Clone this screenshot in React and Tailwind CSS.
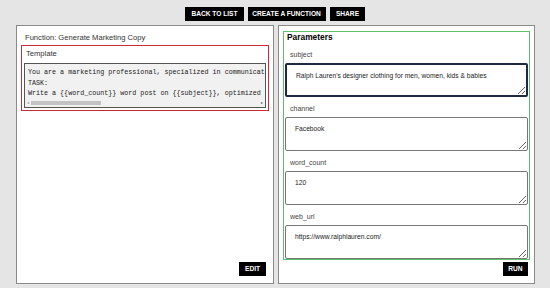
import { useState } from "react";

const params = [
  { name: "subject", value: "Ralph Lauren's designer clothing for men, women, kids & babies", focused: true },
  { name: "channel", value: "Facebook" },
  { name: "word_count", value: "120" },
  { name: "web_url", value: "https://www.ralphlauren.com/" },
];

function BlackButton({ children, className = "" }) {
  return (
    <button
      className={`h-[14px] whitespace-nowrap bg-black px-0 text-center text-[6.6px] font-bold leading-[14px] text-white ${className}`}
    >
      {children}
    </button>
  );
}

function ParamField({ name, value, focused }) {
  const [text, setText] = useState(value);
  return (
    <div>
      <div className="px-[5px] pt-[6px] pb-[3px] text-[7px] leading-[11px] text-[#444]">{name}</div>
      <textarea
        value={text}
        onChange={(e) => setText(e.target.value)}
        className={`block h-[34px] w-full resize-y rounded-[2px] bg-white px-[9px] pt-[5px] text-[6.7px] leading-[11px] text-[#222] outline-none ${
          focused ? "border-2 border-[#1c2a44]" : "border border-[#777]"
        }`}
      />
    </div>
  );
}

export default function App() {
  return (
    <div className="h-[288px] w-[550px] overflow-hidden bg-[#e6e5e5] font-['Liberation_Sans',Arial,sans-serif]">
      {/* top buttons */}
      <div className="flex justify-center gap-[3.5px] pt-[7px]">
        <BlackButton className="w-[59px]">BACK TO LIST</BlackButton>
        <BlackButton className="w-[78px]">CREATE A FUNCTION</BlackButton>
        <BlackButton className="ml-[1px] w-[35px]">SHARE</BlackButton>
      </div>

      <div className="mt-[4px] flex gap-[4px] pl-[16px]">
        {/* left panel */}
        <div className="flex h-[259px] w-[258px] flex-col border border-[#8a8a8a] bg-white px-[4px] pb-[7px]">
          <div className="px-[4px] pt-[6px] pb-[2px] text-[7.6px] leading-[11px] text-[#333]">
            Function: Generate Marketing Copy
          </div>
          <div className="border-[1.5px] border-[#cc2b3b] px-[2px] pb-[2px]">
            <div className="px-[2px] pt-[2px] pb-[4px] text-[7.6px] leading-[11px] text-[#333]">Template</div>
            <div className="border border-[#555] bg-[#f1f1f1]">
              <pre className="overflow-hidden whitespace-pre px-[3px] pt-[3px] font-['Liberation_Mono',monospace] text-[6.7px] leading-[10.5px] text-[#222]">
                {"You are a marketing professional, specialized in communications\nTASK:\nWrite a {{word_count}} word post on {{subject}}, optimized for {{channel}}"}
              </pre>
              <div className="flex h-[8px] items-center gap-[2px] px-[2px]">
                <span className="text-[4px] leading-none text-[#999]">◂</span>
                <div className="h-[4px] w-[70px] bg-[#c2c2c2]" />
                <span className="ml-auto text-[4px] leading-none text-[#555]">▸</span>
              </div>
            </div>
          </div>
          <div className="mt-auto flex justify-end pr-[3px]">
            <BlackButton className="w-[27px]">EDIT</BlackButton>
          </div>
        </div>

        {/* right panel */}
        <div className="flex h-[259px] w-[257px] flex-col border border-[#8a8a8a] bg-white px-[4px] pt-[5px] pb-[7px]">
          <div className="h-[229px] overflow-hidden border-[1.5px] border-[#5cbf6c] px-[1px]">
            <div className="px-[2px] text-[8.4px] font-bold leading-[11px] text-black">Parameters</div>
            <div className="flex flex-col">
              {params.map((p) => (
                <ParamField key={p.name} {...p} />
              ))}
            </div>
          </div>
          <div className="mt-auto flex justify-end pr-[2px]">
            <BlackButton className="w-[25px]">RUN</BlackButton>
          </div>
        </div>
      </div>
    </div>
  );
}
